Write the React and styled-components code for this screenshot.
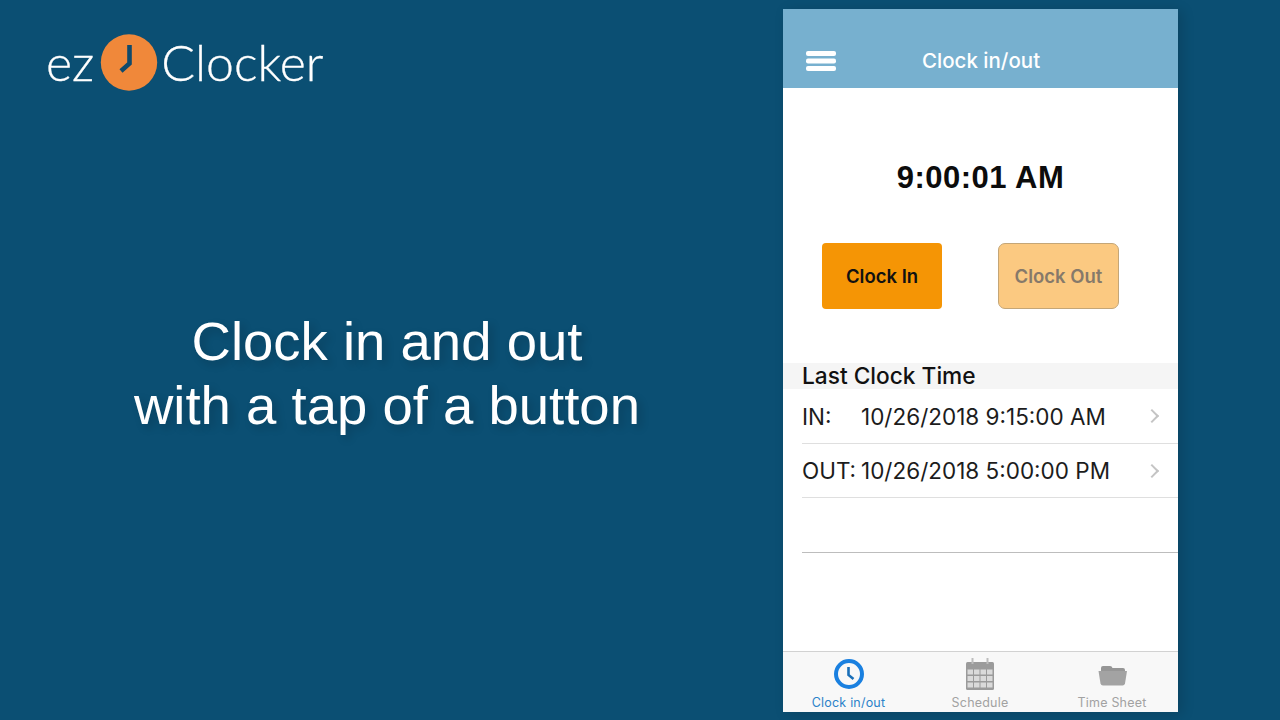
import styled, { createGlobalStyle } from 'styled-components';

const GlobalStyle = createGlobalStyle`
  html, body {
    margin: 0;
    padding: 0;
    background: #0b4f73;
  }
  * {
    box-sizing: border-box;
  }
`;

const rows = [
  { label: 'IN:', value: '10/26/2018 9:15:00 AM' },
  { label: 'OUT:', value: '10/26/2018 5:00:00 PM' },
];

const LogoClock = () => (
  <svg width="58" height="58" viewBox="0 0 58 58">
    <circle cx="29" cy="28.5" r="28.2" fill="#f0883a" />
    <path d="M29.500 11 V29.500 L21 37" fill="none" stroke="#0f4a6c" strokeWidth="4.600" />
  </svg>
);

const MenuIcon = () => (
  <svg width="30" height="22" viewBox="0 0 30 22">
    <rect x="0" y="1" width="30" height="5" rx="2" fill="#fff" />
    <rect x="0" y="8.5" width="30" height="5" rx="2" fill="#fff" />
    <rect x="0" y="16" width="30" height="5" rx="2" fill="#fff" />
  </svg>
);

const ClockIcon = () => (
  <svg width="32" height="32" viewBox="0 0 32 32">
    <circle cx="16" cy="16" r="13" fill="none" stroke="#1a80e0" strokeWidth="4" />
    <path d="M15.500 9 V17 L20.500 21" fill="none" stroke="#1a6fb8" strokeWidth="2.600" />
  </svg>
);

const CalendarIcon = () => (
  <svg width="30" height="32" viewBox="0 0 30 32">
    <rect x="1" y="4" width="28" height="28" rx="1.5" fill="#9b9b9b" />
    <rect x="6.5" y="0" width="2" height="6" fill="#bdbdbd" />
    <rect x="21.5" y="0" width="2" height="6" fill="#bdbdbd" />
    {[11.5, 18, 24.5].map((y) =>
      [2.5, 9, 15.5, 22].map((x) => (
        <rect key={`${x}-${y}`} x={x} y={y} width="5.5" height="5" fill="#dadada" />
      ))
    )}
  </svg>
);

const FolderIcon = () => (
  <svg width="30" height="24" viewBox="0 0 30 24">
    <path d="M4 6 Q4 4 6 4 H13 Q15 4 15.500 6 H26 Q28 6 28 8 V10 H4 Z" fill="#969696" />
    <path d="M1.500 9 H30 L28 21.500 Q27.500 23.500 25.500 23.500 H6 Q4 23.500 3.500 21.500 Z" fill="#a3a3a3" />
  </svg>
);

export default function App() {
  return (
    <Page>
      <GlobalStyle />
      <LeftColumn>
        <Logo>
          <LogoText>ez</LogoText>
          <LogoClock />
          <LogoText>Clocker</LogoText>
        </Logo>
        <Headline>
          Clock in and out
          <br />
          with a tap of a button
        </Headline>
      </LeftColumn>
      <Phone>
        <Header>
          <MenuIcon />
          <HeaderTitle>Clock in/out</HeaderTitle>
        </Header>
        <Content>
          <Time>9:00:01 AM</Time>
          <Buttons>
            <ClockButton>Clock In</ClockButton>
            <ClockButton $disabled>Clock Out</ClockButton>
          </Buttons>
          <SectionHead>Last Clock Time</SectionHead>
          {rows.map((row) => (
            <Row key={row.label}>
              <RowLabel>{row.label}</RowLabel>
              <RowValue>{row.value}</RowValue>
              <Chevron />
            </Row>
          ))}
          <Row />
        </Content>
        <TabBar>
          <Tab $active>
            <TabIcon>
              <ClockIcon />
            </TabIcon>
            Clock in/out
          </Tab>
          <Tab>
            <TabIcon>
              <CalendarIcon />
            </TabIcon>
            Schedule
          </Tab>
          <Tab>
            <TabIcon>
              <FolderIcon />
            </TabIcon>
            Time Sheet
          </Tab>
        </TabBar>
      </Phone>
    </Page>
  );
}

const Page = styled.div`
  width: 1280px;
  height: 720px;
  overflow: hidden;
  display: flex;
  background: #0b4f73;
  padding-top: 9px;
`;
const LeftColumn = styled.div`
  width: 783px;
  display: flex;
  flex-direction: column;
`;
const Logo = styled.div`
  display: flex;
  align-items: center;
  gap: 6px;
  height: 58px;
  margin: 25px 0 0 46px;
  svg {
    margin-right: -3px;
  }
`;
const LogoText = styled.span`
  padding-bottom: 3px;
  font-family: 'Lato', sans-serif;
  font-weight: 300;
  font-size: 50px;
  line-height: 58px;
  color: #fff;
  -webkit-text-stroke: 0.3px #fff;
`;
const Headline = styled.h1`
  width: 774px;
  margin: 218px 0 0;
  text-align: center;
  font-family: 'Liberation Sans', Arial, sans-serif;
  font-weight: 400;
  font-size: 54.5px;
  line-height: 63.5px;
  color: #fff;
  text-shadow: 4px 4px 8px rgba(0, 0, 0, 0.18);
`;
const Phone = styled.div`
  width: 395px;
  height: 703px;
  display: flex;
  flex-direction: column;
  background: #fff;
  box-shadow: 4px 2px 12px rgba(0, 0, 0, 0.15);
`;
const Header = styled.div`
  height: 79px;
  flex-shrink: 0;
  display: flex;
  align-items: center;
  padding: 25px 0 0 23px;
  background: #77b0cf;
`;
const HeaderTitle = styled.div`
  margin: 0 0 2px 86px;
  font-family: 'Inter', sans-serif;
  font-weight: 500;
  font-size: 20.500px;
  color: #fff;
`;
const Content = styled.div`
  flex: 1;
  display: flex;
  flex-direction: column;
`;
const Time = styled.div`
  margin-top: 71px;
  text-align: center;
  font-family: 'Liberation Sans', Arial, sans-serif;
  font-weight: 700;
  font-size: 31px;
  line-height: 38px;
  letter-spacing: 0.5px;
  color: #0c0c0c;
`;
const Buttons = styled.div`
  display: flex;
  gap: 56px;
  margin: 46px 0 54px 39px;
`;
const ClockButton = styled.div`
  width: ${(p) => (p.$disabled ? '121px' : '120px')};
  height: 66px;
  display: flex;
  align-items: center;
  justify-content: center;
  font-family: 'Inter', sans-serif;
  font-weight: 600;
  font-size: 18.500px;
  background: ${(p) => (p.$disabled ? '#fbc981' : '#f59505')};
  color: ${(p) => (p.$disabled ? '#86796a' : '#111')};
  border: ${(p) => (p.$disabled ? '1px solid #c4a677' : 'none')};
  border-radius: ${(p) => (p.$disabled ? '7px' : '4px')};
`;
const SectionHead = styled.div`
  height: 26px;
  padding-left: 19px;
  background: #f5f5f5;
  font-family: 'Inter', sans-serif;
  font-weight: 500;
  font-size: 22.700px;
  line-height: 26px;
  color: #111;
`;
const Row = styled.div`
  height: 54.500px;
  margin-left: 19px;
  padding-top: 1px;
  display: flex;
  align-items: center;
  border-bottom: 1px solid #dfdfdf;
  font-family: 'Inter', sans-serif;
  font-size: 22.500px;
  color: #1c1c1c;
  &:last-child {
    border-bottom-color: #bdbdbd;
  }
`;
const RowLabel = styled.span`
  width: 59px;
`;
const RowValue = styled.span`
  flex: 1;
`;
const Chevron = styled.span`
  width: 10px;
  height: 10px;
  margin-right: 21px;
  border-top: 2px solid #c4c4c4;
  border-right: 2px solid #c4c4c4;
  transform: rotate(45deg);
`;
const TabBar = styled.div`
  height: 61px;
  flex-shrink: 0;
  display: grid;
  grid-template-columns: 131px 132px 132px;
  background: #f8f8f8;
  border-top: 1px solid #d2d2d2;
`;
const Tab = styled.div`
  display: flex;
  flex-direction: column;
  align-items: center;
  font-family: 'Inter', sans-serif;
  font-size: 12.500px;
  line-height: 16px;
  letter-spacing: 0.2px;
  color: ${(p) => (p.$active ? '#2b82c9' : '#a2a2a2')};
`;
const TabIcon = styled.div`
  height: 43px;
  display: flex;
  align-items: center;
  justify-content: center;
`;
